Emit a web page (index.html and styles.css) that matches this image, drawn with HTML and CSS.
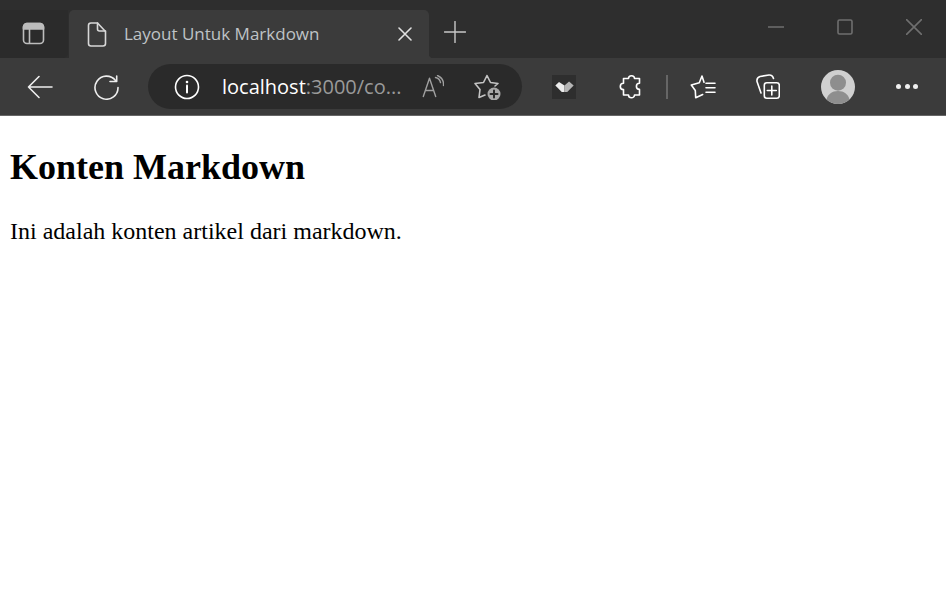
FILE: index.html
```html
<!DOCTYPE html>
<html lang="en">
<head>
    <meta charset="UTF-8">
    <meta name="viewport" content="width=device-width, initial-scale=1.0">
    <title>Layout Untuk Markdown</title>
    <link rel="stylesheet" href="styles.css">
</head>
<body>
    <div class="titlebar">
        <div class="tab-actions">
            <svg class="icon" width="24" height="24" viewBox="0 0 24 24"><path class="band" d="M1.500 7V5a3.500 3.500 0 0 1 3.500-3.500h13a3.500 3.500 0 0 1 3.500 3.500v2z"/><rect x="1.500" y="1.500" width="20" height="20" rx="3.500"/><path d="M7.500 7v14"/></svg>
        </div>
        <div class="tab">
            <svg class="icon tab-page" width="20" height="26" viewBox="0 0 20 26"><path d="M1.500 4.500a2.500 2.500 0 0 1 2.500-2.500h6.500l8 8.500v12a2.500 2.500 0 0 1-2.500 2.500h-12a2.500 2.500 0 0 1-2.500-2.500z"/><path d="M10.500 2v6a2 2 0 0 0 2 2h6"/></svg>
            <span class="tab-title">Layout Untuk Markdown</span>
            <svg class="icon tab-close" width="14" height="14" viewBox="0 0 14 14"><path d="M1 1l12 12M13 1l-12 12"/></svg>
        </div>
        <svg class="icon new-tab" width="22" height="22" viewBox="0 0 22 22"><path d="M11 0.500v21M0.500 11h21"/></svg>
        <div class="window-controls">
            <svg class="icon" width="16" height="16" viewBox="0 0 16 16"><path d="M0.500 8h15"/></svg>
            <svg class="icon" width="16" height="16" viewBox="0 0 16 16"><rect x="1" y="1" width="14" height="14" rx="1.500"/></svg>
            <svg class="icon" width="16" height="16" viewBox="0 0 16 16"><path d="M0.500 0.500l15 15M15.500 0.500l-15 15"/></svg>
        </div>
    </div>

    <div class="toolbar">
        <svg class="icon nav back" width="26" height="24" viewBox="0 0 26 24"><path d="M25 12H1.500M12 1.500L1.500 12 12 22.500"/></svg>
        <svg class="icon nav reload" width="26" height="26" viewBox="0 0 26 26"><path d="M22.500 6.500a11.500 11.500 0 1 0 2.500 7"/><path d="M23.700 2v5.500H17"/></svg>
        <div class="address">
            <svg class="icon info" width="26" height="26" viewBox="0 0 26 26"><circle cx="13" cy="13" r="11.500"/><path d="M13 11.500v7" stroke-width="2"/><circle class="dot" cx="13" cy="8" r="1.300"/></svg>
            <span class="url"><span class="host">localhost</span>:3000/co...</span>
            <svg class="icon read" width="24" height="24" viewBox="0 0 24 24"><path d="M3.300 21.500L9.500 3.200 15.700 21.500M5.500 15.500h8"/><path d="M15.500 2.500a6.500 6.500 0 0 1 5 5M17.500 0.500a10 10 0 0 1 6 10"/></svg>
            <svg class="icon fav-add" width="28" height="26" viewBox="0 0 28 26"><path d="M22 12l3-2.500-7.500-1L14 1.500l-3.500 7-8.500 1 5 6-1 8 6-2.500"/><circle class="badge" cx="21" cy="20" r="6.500"/><path class="badge-plus" d="M21 16.500v7M17.500 20h7"/></svg>
        </div>
        <div class="ext-box">
            <svg width="20" height="12" viewBox="0 0 20 12"><path class="ext-light" d="M0 5L4 1l6 4v7H7z"/><path class="ext-dim" d="M10 5l5-4.500L20 5l-7 7h-3z"/></svg>
        </div>
        <svg class="icon ext" width="24" height="26" viewBox="0 0 24 26"><path d="M4.500 4.500h5a3 2.800 0 0 1 6 0h5v4.700a3.100 3.100 0 0 0 0 6.200v5.600h-5a3 2.800 0 0 1-6 0h-5v-5.400a3.200 3.200 0 0 1 0-6.400z"/></svg>
        <span class="divider"></span>
        <svg class="icon favs" width="26" height="24" viewBox="0 0 26 24"><path d="M14 7.200L12 1 9.300 7.800 1.300 10l4 5.500.4 7.300 7-3.300"/><path d="M16 8.200h9M16 12.800h9M16 17.200h9"/></svg>
        <svg class="icon collections" width="25" height="26" viewBox="0 0 25 26"><path d="M6 19L2 7.500Q1.500 3.500 5 2.500L14 1Q17.500 .8 18.500 4.500"/><rect x="9.300" y="8.800" width="15" height="15.500" rx="2.500"/><path d="M16.800 12v9M12.300 16.500h9"/></svg>
        <svg class="avatar" width="34" height="34" viewBox="0 0 34 34"><circle cx="17" cy="17" r="17" fill="#d0d0d0"/><circle cx="17" cy="12.700" r="8" fill="#8e8e8e"/><path d="M5.500 29.500C7 24 11 21 17 21s10 3 11.500 8.500a17 17 0 0 1-23 0z" fill="#8e8e8e"/></svg>
        <div class="more"><span></span><span></span><span></span></div>
    </div>

    <main class="content">
        <h1>Konten Markdown</h1>
        <p>Ini adalah konten artikel dari markdown.</p>
    </main>
</body>
</html>
```

FILE: styles.css
```css
body {
    margin: 0;
    background-color: #ffffff;
    font-family: "Liberation Serif", serif;
    overflow: hidden;
}

.icon {
    flex: none;
    fill: none;
    stroke: #eeeeee;
    stroke-width: 1.6;
    stroke-linecap: round;
    stroke-linejoin: round;
}

/* title bar */
.titlebar {
    display: flex;
    align-items: flex-end;
    height: 58px;
    background-color: #2e2e2e;
}

.tab-actions {
    display: flex;
    align-items: center;
    width: 68px;
    height: 48px;
    padding-left: 22px;
    box-sizing: border-box;
    background-color: #2b2b2b;
    border-radius: 0 0 5px 0;
}

.tab-actions .icon {
    stroke: #bdbdbd;
}

.band {
    fill: #bdbdbd;
}

.tab {
    position: relative;
    display: flex;
    align-items: center;
    width: 360px;
    height: 48px;
    margin-left: 1px;
    padding: 0 17px 0 18px;
    box-sizing: border-box;
    background-color: #3b3b3b;
    border-radius: 5px 5px 0 0;
}

/* little flare at the foot of the tab */
.tab::after {
    content: "";
    position: absolute;
    right: -4px;
    bottom: 0;
    width: 4px;
    height: 4px;
    background: radial-gradient(circle at 100% 0, transparent 4px, #3b3b3b 4.500px);
}

.tab-page {
    stroke: #d8d8d8;
}

.tab-title {
    flex: 1;
    margin: 0 0 2px 17px;
    color: #bfc3c6;
    font-family: "Open Sans", sans-serif;
    font-size: 17px;
}

.tab-close {
    stroke: #e0e0e0;
}

.new-tab {
    margin: 0 0 15px 15px;
    stroke: #c8c8c8;
    stroke-width: 1.4;
}

.window-controls {
    display: flex;
    gap: 53px;
    margin: 0 24px 23px auto;
}

.window-controls .icon {
    stroke: #6f6f6f;
}

/* toolbar */
.toolbar {
    display: flex;
    align-items: center;
    height: 57px;
    background-color: #3b3b3b;
    border-bottom: 1px solid #666666;
}

.back {
    margin-left: 27px;
}

.reload {
    margin-left: 40px;
}

.address {
    display: flex;
    align-items: center;
    width: 374px;
    height: 45px;
    margin-left: 29px;
    padding-left: 26px;
    box-sizing: border-box;
    background-color: #2a2a2a;
    border-radius: 23px;
}

.url {
    width: 198px;
    margin-left: 22px;
    color: #9a9a9a;
    font-family: "Open Sans", sans-serif;
    font-size: 20px;
    white-space: nowrap;
}

.host {
    color: #ffffff;
}

.info {
    stroke: #ffffff;
}

.dot {
    fill: #ffffff;
    stroke: none;
}

.read {
    stroke: #a0a0a0;
    stroke-width: 1.4;
}

.fav-add {
    margin-left: 29px;
    stroke: #c4c4c4;
}

.badge {
    fill: #a8a8a8;
    stroke: none;
}

.badge-plus {
    stroke: #2a2a2a;
    stroke-width: 2;
}

.ext-box {
    display: flex;
    align-items: center;
    justify-content: center;
    width: 24px;
    height: 24px;
    margin-left: 30px;
    background-color: #2e2e2e;
}

.ext-box svg {
    width: 19px;
    height: 11px;
}

.ext-light {
    fill: #ececec;
}

.ext-dim {
    fill: #b5b5b5;
}

.ext {
    margin-left: 43px;
}

.divider {
    width: 2px;
    height: 24px;
    margin-left: 23px;
    background-color: #666666;
}

.favs {
    margin-left: 22px;
}

.favs,
.ext,
.collections {
    stroke: #ffffff;
}

.collections {
    margin-left: 39px;
}

.avatar {
    flex: none;
    margin-left: 41px;
}

.more {
    display: flex;
    gap: 3.500px;
    margin-left: 41px;
}

.more span {
    width: 5px;
    height: 5px;
    background-color: #f0f0f0;
    border-radius: 50%;
}

/* page content */
.content {
    padding: 0 10px;
    color: #000000;
}

h1 {
    margin: 30px 0 0;
    font-size: 36px;
    font-weight: bold;
}

p {
    margin: 30px 0 0;
    font-size: 24px;
}
```
